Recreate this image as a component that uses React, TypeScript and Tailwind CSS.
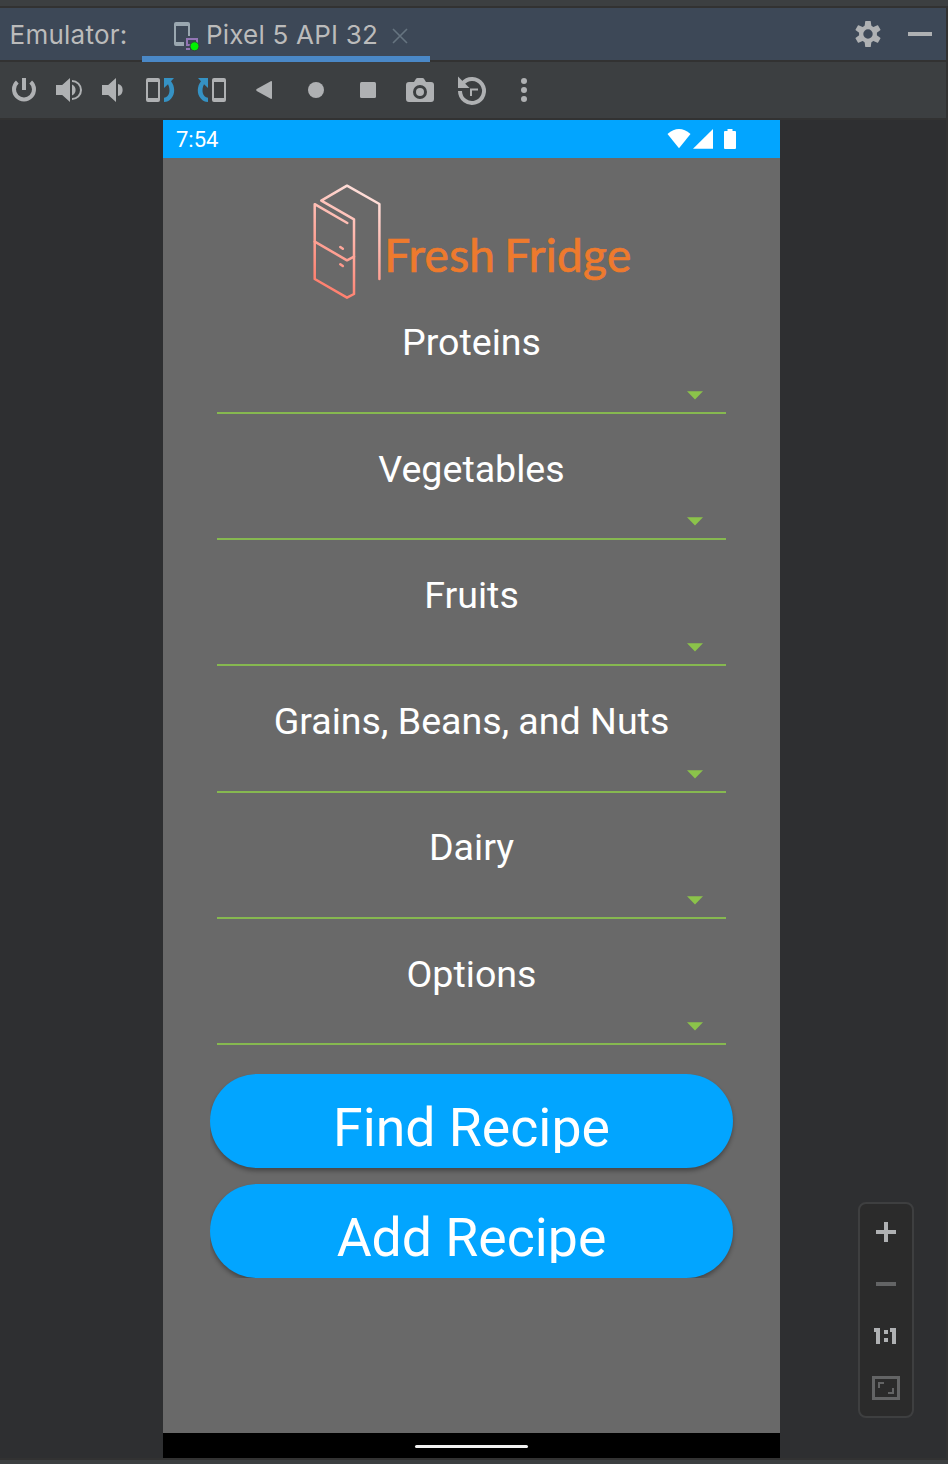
import type { ReactNode } from "react";

const categories = ["Proteins", "Vegetables", "Fruits", "Grains, Beans, and Nuts", "Dairy", "Options"];

function Tool({ x, w, label, children }: { x: number; w: number; label: string; children: ReactNode }) {
  return (
    <button aria-label={label} className="block shrink-0">
      <svg width={w} height={56} viewBox={`${x} 62 ${w} 56`} fill="#afb1b3">
        {children}
      </svg>
    </button>
  );
}

function Toolbar() {
  return (
    <div className="flex h-[58px] shrink-0 border-b-2 border-[#323232] bg-[#3c3f41]">
      <Tool x={0} w={48} label="Power">
        <path d="M17.3 82 A10 10 0 1 0 30.7 82" fill="none" stroke="#afb1b3" strokeWidth="4" />
        <rect x="22" y="78" width="4" height="12" />
      </Tool>
      <Tool x={48} w={44} label="Volume up">
        <path d="M56 85h6.2l7.8-7v24l-7.8-7H56zM72 84.5a6 6 0 0 1 0 11z" />
        <path d="M72 81a9 9 0 0 1 0 18" fill="none" stroke="#afb1b3" strokeWidth="2" />
      </Tool>
      <Tool x={92} w={42} label="Volume down">
        <path d="M102 85h6.2l7.8-7v24l-7.8-7H102zM118 84a6.2 6.2 0 0 1 0 12z" />
      </Tool>
      <Tool x={134} w={52} label="Rotate left">
        <path fillRule="evenodd" d="M148 78h10a2 2 0 0 1 2 2v20a2 2 0 0 1-2 2h-10a2 2 0 0 1-2-2V80a2 2 0 0 1 2-2zM148 82v16h10V82z" />
        <path fill="#3592c4" d="M164 78h10l-3 3.2C175 86 175.500 94 171 98.700C169 101 167 102 164 102v-4.200C169.500 97 171 90 168 84.200L164 88z" />
      </Tool>
      <Tool x={186} w={52} label="Rotate right">
        <path fillRule="evenodd" d="M214 78h10a2 2 0 0 1 2 2v20a2 2 0 0 1-2 2h-10a2 2 0 0 1-2-2V80a2 2 0 0 1 2-2zM214 82v16h10V82z" />
        <path fill="#3592c4" d="M208 88V78h-10l3 3.200C197 86 196.500 94 201 98.700C203 101 205 102 208 102v-4.200C202.500 97 201 90 204 84.200z" />
      </Tool>
      <Tool x={238} w={52} label="Back">
        <path d="M256.700 89.100L270.700 81.200Q272 80.700 272 82V98Q272 99.300 270.700 98.800L256.700 90.900Q255.500 90 256.700 89.100z" />
      </Tool>
      <Tool x={290} w={52} label="Home">
        <circle cx="316" cy="90" r="8" />
      </Tool>
      <Tool x={342} w={52} label="Overview">
        <rect x="360" y="82" width="16" height="16" rx="1.500" />
      </Tool>
      <Tool x={394} w={52} label="Take screenshot">
        <path fillRule="evenodd" d="M409 82h5l2-3.200q.5-.8 1.500-.8h5q1 0 1.500.8L426 82h5a3 3 0 0 1 3 3v14a3 3 0 0 1-3 3h-22a3 3 0 0 1-3-3V85a3 3 0 0 1 3-3zM420 85a7 7 0 1 0 0 14a7 7 0 0 0 0-14z" />
        <circle cx="420" cy="92" r="4" />
      </Tool>
      <Tool x={446} w={52} label="Snapshots">
        <path d="M462.600 83.500A12 12 0 1 1 460 91" fill="none" stroke="#afb1b3" strokeWidth="4" />
        <path d="M458 76.500V88h11.500z" />
        <path d="M471 96v-6.500h7" fill="none" stroke="#afb1b3" strokeWidth="2" />
      </Tool>
      <Tool x={498} w={52} label="More">
        <circle cx="524" cy="81" r="3" />
        <circle cx="524" cy="90" r="3" />
        <circle cx="524" cy="99" r="3" />
      </Tool>
    </div>
  );
}

function Header() {
  return (
    <header className="flex h-[54px] shrink-0 bg-[#3d4857] font-['Inter',sans-serif] text-[26px] leading-[54px] text-[#bbbbbb]">
      <div className="h-full w-[142px] border-b-2 border-[#323232] pl-[9.500px]">
        <span className="block whitespace-nowrap tracking-[0.250px]">Emulator:</span>
      </div>
      <div className="flex h-full w-[288px] border-b-6 border-[#4a88c7] pl-[30px]">
        <svg className="shrink-0" width="30" height="48" viewBox="172 8 30 48">
          <path fill="#9aa7b0" fillRule="evenodd" d="M176 22h12a2 2 0 0 1 2 2v12h-2V26h-12v16h8v4h-8a2 2 0 0 1-2-2V24a2 2 0 0 1 2-2z" />
          <path fill="#9376b5" fillRule="evenodd" d="M186 38h12v8h-12zM188 40v4h8v-4zM186 48h4v2h-4z" />
          <circle cx="194.500" cy="46.300" r="4.500" fill="#00f200" stroke="#33433d" strokeWidth="1" />
        </svg>
        <span className="ml-[4px] w-[174px] whitespace-nowrap tracking-[0.200px]">Pixel 5 API 32</span>
        <svg className="ml-[10px] shrink-0" width="20" height="48" viewBox="390 8 20 48">
          <path d="M393 29l14 14M407 29l-14 14" stroke="#667480" strokeWidth="1.600" />
        </svg>
      </div>
      <div className="flex h-full flex-1 justify-end border-b-2 border-[#323232] pr-[12px]">
        <svg width="84" height="52" viewBox="850 8 84 52" fill="#afb1b3">
          <path fillRule="evenodd" d="M868 25a9 9 0 1 0 0 18a9 9 0 0 0 0-18zM868 29.300a4.700 4.700 0 1 1 0 9.400a4.700 4.700 0 0 1 0-9.400z" />
          {[0, 60, 120, 180, 240, 300].map((a) => (
            <path key={a} d="M865.200 21.500q0-.5.500-.5h4.600q.5 0 .5.500l.7 5.500h-7z" transform={`rotate(${a} 868 34)`} />
          ))}
          <rect x="908" y="32" width="24" height="4" />
        </svg>
      </div>
    </header>
  );
}

function Logo() {
  return (
    <div className="mx-auto flex h-[120px] w-[323px]">
      <svg className="shrink-0" width="75" height="120" viewBox="310 180 75 120">
        <defs>
          <linearGradient id="fridge" gradientUnits="userSpaceOnUse" x1="318" y1="290" x2="374" y2="194">
            <stop offset="0" stopColor="#ff7a68" />
            <stop offset="1" stopColor="#ffe2dd" />
          </linearGradient>
        </defs>
        <g fill="none" stroke="url(#fridge)" strokeWidth="2.500" strokeLinecap="round" strokeLinejoin="round">
          <path d="M379.400 279V204L347 185.700L321.300 200.700L354 219.300V294L347 297.700L314.700 279V204.200L347.300 223" />
          <path d="M314.700 241.700L347 260.300L354 256.700M340.300 247l2.500 1.800M340.300 264.200l2.500 1.800" />
        </g>
      </svg>
      <span className="mt-[46px] -ml-[0.800px] whitespace-nowrap font-['Lato',sans-serif] text-[46px] leading-[58px] tracking-[0.280px] text-[#ee7a2d] [-webkit-text-stroke:0.700px_#ee7a2d] [word-spacing:-3px]">
        Fresh Fridge
      </span>
    </div>
  );
}

function Category({ name }: { name: string }) {
  return (
    <div className="flex h-[126.300px] flex-col">
      <h2 className="h-[73.500px] text-center text-[37.600px] leading-[50px] text-white">{name}</h2>
      <button aria-label={name} className="flex h-[23px] shrink-0 justify-end border-b-2 border-[#86b850] pr-[23px]">
        <svg width="16" height="9" viewBox="0 0 16 9" fill="#8bc34a">
          <path d="M0 .2h16L8 8.400z" />
        </svg>
      </button>
    </div>
  );
}

function RecipeButton({ children }: { children: ReactNode }) {
  return (
    <button className="flex h-[94px] w-[523px] shrink-0 flex-col items-center rounded-full bg-[#02a5ff] pt-[22px] text-[53.600px] leading-[64px] text-white shadow-[0_3px_4px_rgba(0,0,0,0.32)]">
      <span className="block h-[57px] overflow-hidden whitespace-nowrap">{children}</span>
    </button>
  );
}

function Phone() {
  return (
    <main className="flex h-[1338px] w-[617px] flex-col bg-[#696969] font-['Roboto',sans-serif]">
      <div className="flex h-[38px] shrink-0 justify-between bg-[#02a5ff] pr-[39px] pl-[13px] text-white">
        <span className="text-[22px] leading-[39px]">7:54</span>
        <svg width="76" height="38" viewBox="665 120 76 38" fill="white">
          <path d="M667.500 134Q679 124 690.500 134L679 148.300z" />
          <path d="M713 129v19.700h-20z" />
          <path d="M727.500 129h5v2h2.500q1 0 1 1v16q0 1-1 1h-10q-1 0-1-1v-16q0-1 1-1h2.500z" />
        </svg>
      </div>
      <div className="flex flex-1 flex-col pt-[22px]">
        <Logo />
        <div className="mt-[17.300px] px-[54px]">
          {categories.map((name) => (
            <Category key={name} name={name} />
          ))}
        </div>
        <div className="-mt-[1.100px] ml-[47px] flex h-[204px] w-[540px] flex-col gap-[16px] overflow-hidden">
          <RecipeButton>Find Recipe</RecipeButton>
          <RecipeButton>Add Recipe</RecipeButton>
        </div>
      </div>
      <div className="flex h-[25px] shrink-0 justify-center bg-black pt-[12px]">
        <div className="h-[3px] w-[113px] rounded-full bg-[#f1f1f1]" />
      </div>
    </main>
  );
}

function ZoomPanel() {
  return (
    <aside className="mt-[1082px] h-[216px] w-[56px] rounded-[8px] border-2 border-[#3e3f40] bg-[#2b2b2b]">
      <svg width="52" height="212" viewBox="860 1204 52 212">
        <path fill="#afb1b3" d="M884 1222h4v8h8v4h-8v8h-4v-8h-8v-4h8z" />
        <rect x="876" y="1282" width="20" height="4" fill="#636465" />
        <path fill="#afb1b3" d="M874 1328h6v16h-4v-12h-2zM890 1328h6v16h-4v-12h-2zM884 1330h4v4h-4zM884 1338h4v4h-4z" />
        <path fill="#636465" fillRule="evenodd" d="M872 1376h28v24h-28zM875 1379v18h22v-18z" />
        <path fill="#636465" d="M878 1382h6v2h-4v4h-2zM892 1388h2v6h-6v-2h4z" />
      </svg>
    </aside>
  );
}

export default function App() {
  return (
    <div className="flex h-[1464px] w-[948px] flex-col overflow-hidden bg-[#3c3f41]">
      <div className="h-[8px] shrink-0 border-b-2 border-[#323232]" />
      <div className="flex h-[1452px] shrink-0 flex-col border-r-2 border-b-2 border-[#323232] bg-[#2e2f31]">
        <Header />
        <Toolbar />
        <div className="flex h-[1338px] pl-[163px]">
          <Phone />
          <div className="w-[78px]" />
          <ZoomPanel />
        </div>
      </div>
    </div>
  );
}
